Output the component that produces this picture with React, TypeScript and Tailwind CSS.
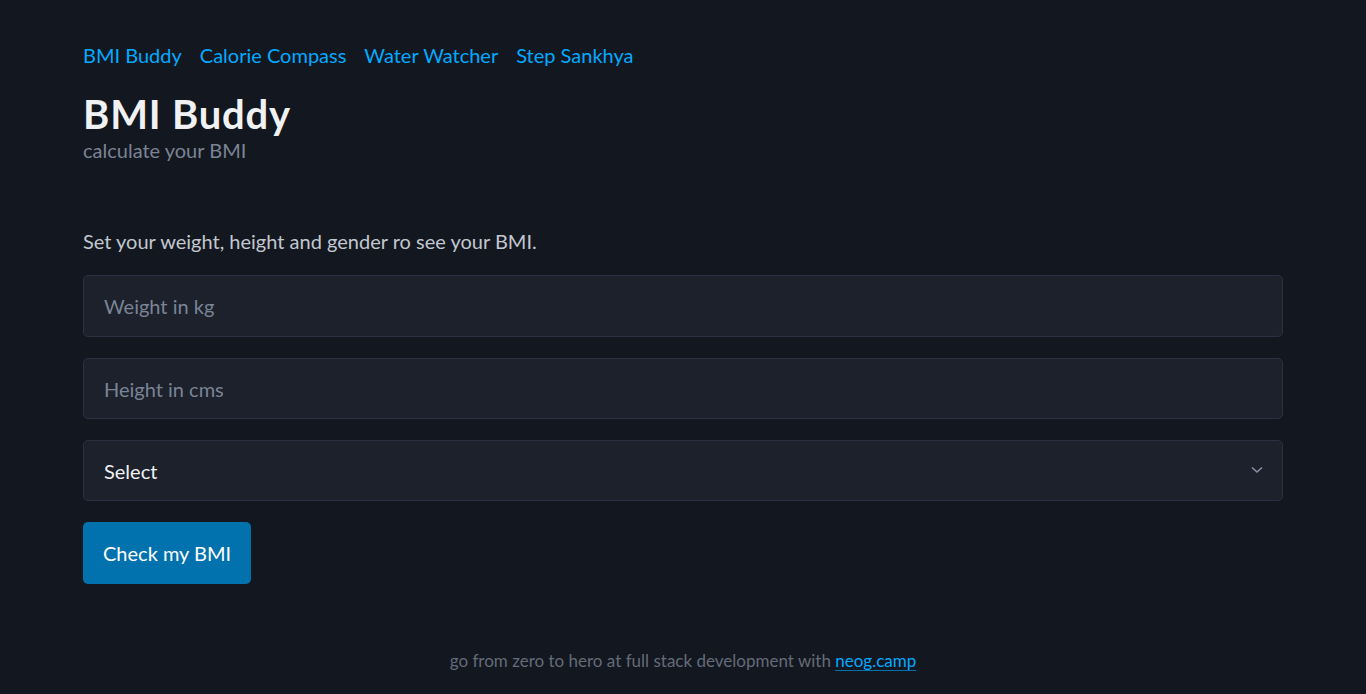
import React from "react";

export default function App() {
  const font = { fontFamily: 'Lato, "Noto Sans", sans-serif' };
  return (
    <div className="min-h-[694px] bg-[#13171f] text-[#c2c7d0]" style={font}>
      <div className="mx-auto w-[1200px] flex flex-col">
        <nav className="pt-[40px] flex gap-[18px] text-[20px] leading-[30px] text-[#01aaff]">
          <a href="#">BMI Buddy</a>
          <a href="#">Calorie Compass</a>
          <a href="#">Water Watcher</a>
          <a href="#">Step Sankhya</a>
        </nav>
        <div className="mt-[22px] flex flex-col">
          <h1 className="text-[40px] leading-[44px] font-bold tracking-[0.8px] text-[#f0f1f3]">BMI Buddy</h1>
          <p className="-mt-[1px] text-[20px] leading-[30px] text-[#7b8495]">calculate your BMI</p>
        </div>
        <p className="mt-[61px] text-[20px] leading-[30px] text-[#c2c7d0]">
          Set your weight, height and gender ro see your BMI.
        </p>
        <div className="mt-[19px] flex flex-col gap-[21px]">
          <input
            placeholder="Weight in kg"
            className="h-[62px] w-full rounded-[5px] border border-[#2a3140] bg-[#1c212c] px-[20px] text-[20px] text-[#c2c7d0] placeholder:text-[#7b8495] outline-none"
          />
          <input
            placeholder="Height in cms"
            className="h-[61px] w-full rounded-[5px] border border-[#2a3140] bg-[#1c212c] px-[20px] text-[20px] text-[#c2c7d0] placeholder:text-[#7b8495] outline-none"
          />
          <div className="relative h-[61px] w-full rounded-[5px] border border-[#2a3140] bg-[#1c212c] flex items-center px-[20px] text-[20px] text-[#f0f1f3]">
            <span>Select</span>
            <svg className="absolute right-[19px] top-[25px]" width="12" height="8" viewBox="0 0 12 8" fill="none">
              <path d="M1 1.5 L6 6 L11 1.5" stroke="#8891a4" strokeWidth="1.6" />
            </svg>
          </div>
          <div>
            <button className="h-[62px] px-[20px] rounded-[5px] bg-[#0172ad] text-[20px] text-white">
              Check my BMI
            </button>
          </div>
        </div>
        <footer className="mt-[64px] text-center text-[17px] leading-[26px] text-[#646b79]">
          go from zero to hero at full stack development with{" "}
          <a href="#" className="text-[#01aaff] underline underline-offset-[3px] decoration-[#0172ad]">neog.camp</a>
        </footer>
      </div>
    </div>
  );
}
